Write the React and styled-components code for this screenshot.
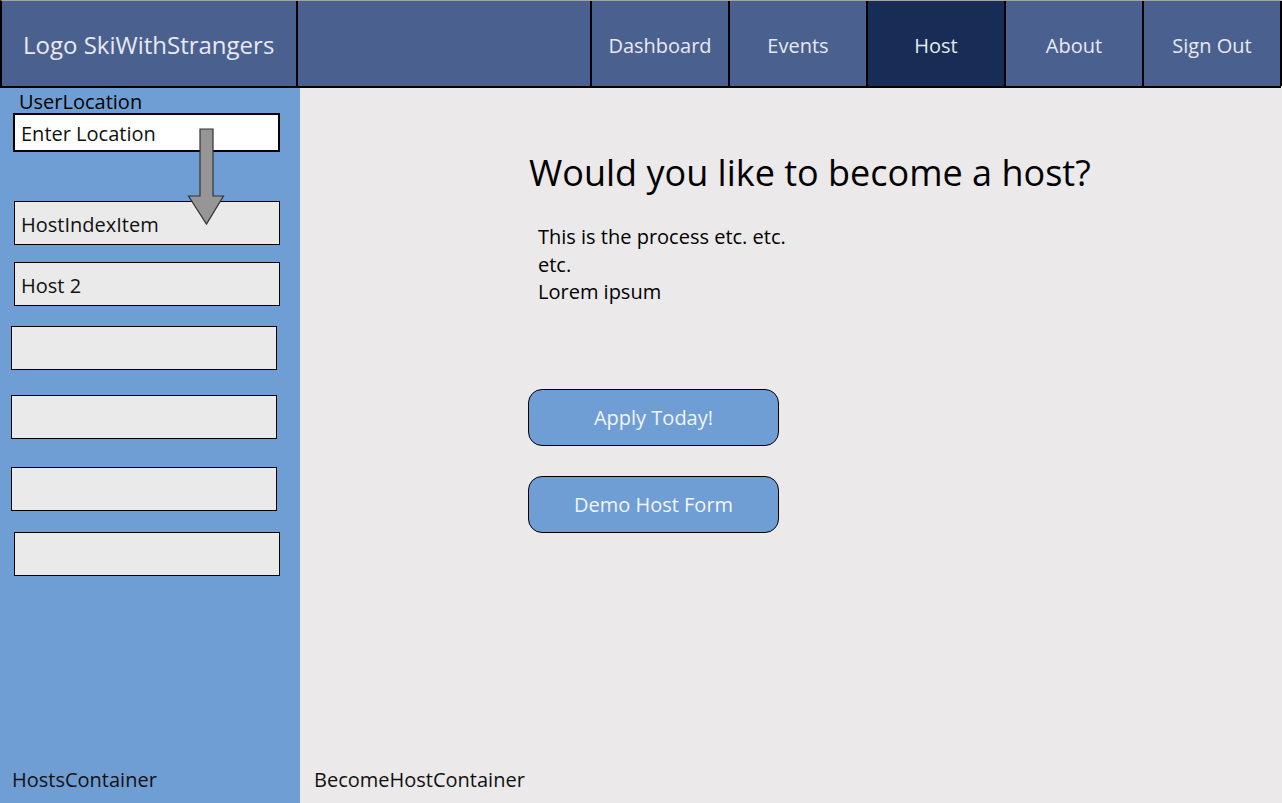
import styled, { createGlobalStyle } from 'styled-components'

const GlobalStyle = createGlobalStyle`
  html, body {
    margin: 0;
    padding: 0;
    background: #ebe9ea;
    font-family: "Open Sans", "Noto Sans", sans-serif;
  }
  * {
    box-sizing: border-box;
  }
`

const Page = styled.div`
  width: 1282px;
  height: 803px;
  display: flex;
  flex-direction: column;
  overflow: hidden;
`

const Header = styled.header`
  display: flex;
  height: 88px;
  border-top: 1px solid #a4a4a8;
  border-bottom: 2px solid #000;
  border-left: 2px solid #000;
  background: #4a6190;
  width: 1281px;
`

const Cell = styled.div`
  width: ${(p) => p.$width}px;
  flex: none;
  display: flex;
  align-items: center;
  justify-content: ${(p) => (p.$left ? 'flex-start' : 'center')};
  padding-left: ${(p) => (p.$left ? '21px' : '0')};
  padding-top: ${(p) => (p.$left ? '2px' : '3px')};
  border-right: 2px solid #000;
  background: ${(p) => (p.$active ? '#172d55' : '#4a6190')};
  color: #e8e9f0;
  font-size: ${(p) => (p.$big ? '24px' : '20px')};
`

const Body = styled.div`
  flex: 1;
  display: flex;
`

const Sidebar = styled.aside`
  position: relative;
  width: 300px;
  flex: none;
  background: #6f9ed4;
  display: flex;
  flex-direction: column;
`

const Label = styled.div`
  font-size: 20px;
  line-height: 25px;
  padding-top: 1px;
  height: 25px;
  color: #000;
  margin-left: ${(p) => p.$left}px;
`

const LocationInput = styled.div`
  margin-left: 13px;
  width: 267px;
  height: 39px;
  background: #fff;
  border: 2px solid #000;
  padding-left: 6px;
  font-size: 20px;
  line-height: 38px;
  color: #111;
`

const HostItem = styled.div`
  margin-left: ${(p) => p.$left}px;
  margin-top: ${(p) => p.$top}px;
  width: 266px;
  height: 44px;
  background: #eaeaea;
  border: 1px solid #000;
  padding: 2px 0 0 6px;
  font-size: 20px;
  line-height: 42px;
  color: #111;
`

const Arrow = styled.svg`
  position: absolute;
  left: 187px;
  top: 40px;
`

const Footer = styled.div`
  margin-top: auto;
  padding-bottom: 10px;
  font-size: 20px;
  line-height: 26px;
  color: #111;
  margin-left: ${(p) => p.$left}px;
`

const Main = styled.main`
  flex: 1;
  display: flex;
  flex-direction: column;
  background: #ebe9ea;
`

const Content = styled.div`
  padding-left: 229px;
  padding-top: 60px;
`

const Heading = styled.h1`
  margin: 0;
  font-size: 36px;
  font-weight: 400;
  line-height: 49px;
  color: #000;
`

const Text = styled.p`
  margin: 26px 0 0 9px;
  width: 270px;
  font-size: 20px;
  line-height: 27.5px;
  color: #000;
`

const Buttons = styled.div`
  margin-top: 83px;
  margin-left: -1px;
  display: flex;
  flex-direction: column;
  gap: 30px;
`

const Button = styled.button`
  width: 251px;
  height: 57px;
  border: 1px solid #000;
  border-radius: 14px;
  background: #6f9ed4;
  color: #f2f4fa;
  font-family: inherit;
  font-size: 20px;
  padding: 0;
`

const items = [
  { label: 'HostIndexItem', left: 14, top: 49 },
  { label: 'Host 2', left: 14, top: 17 },
  { label: '', left: 11, top: 20 },
  { label: '', left: 11, top: 25 },
  { label: '', left: 11, top: 28 },
  { label: '', left: 14, top: 21 },
]

const navs = ['Dashboard', 'Events', 'Host', 'About', 'Sign Out']

export default function App() {
  return (
    <Page>
      <GlobalStyle />
      <Header>
        <Cell $width={296} $left $big>
          Logo SkiWithStrangers
        </Cell>
        <Cell $width={294} />
        {navs.map((n) => (
          <Cell key={n} $width={138} $active={n === 'Host'}>
            {n}
          </Cell>
        ))}
      </Header>
      <Body>
        <Sidebar>
          <Label $left={19}>UserLocation</Label>
          <LocationInput>Enter Location</LocationInput>
          {items.map((item, i) => (
            <HostItem key={i} $left={item.left} $top={item.top}>
              {item.label}
            </HostItem>
          ))}
          <Arrow width="38" height="98" viewBox="0 0 38 98">
            <path
              d="M13 1 H26 V68 H36.5 L19.5 96 L1.5 68 H13 Z"
              fill="#979595"
              stroke="#333"
              strokeWidth="1.2"
            />
          </Arrow>
          <Footer $left={12}>HostsContainer</Footer>
        </Sidebar>
        <Main>
          <Content>
            <Heading>Would you like to become a host?</Heading>
            <Text>
              This is the process etc. etc. etc.
              <br />
              Lorem ipsum
            </Text>
            <Buttons>
              <Button>Apply Today!</Button>
              <Button>Demo Host Form</Button>
            </Buttons>
          </Content>
          <Footer $left={14}>BecomeHostContainer</Footer>
        </Main>
      </Body>
    </Page>
  )
}
